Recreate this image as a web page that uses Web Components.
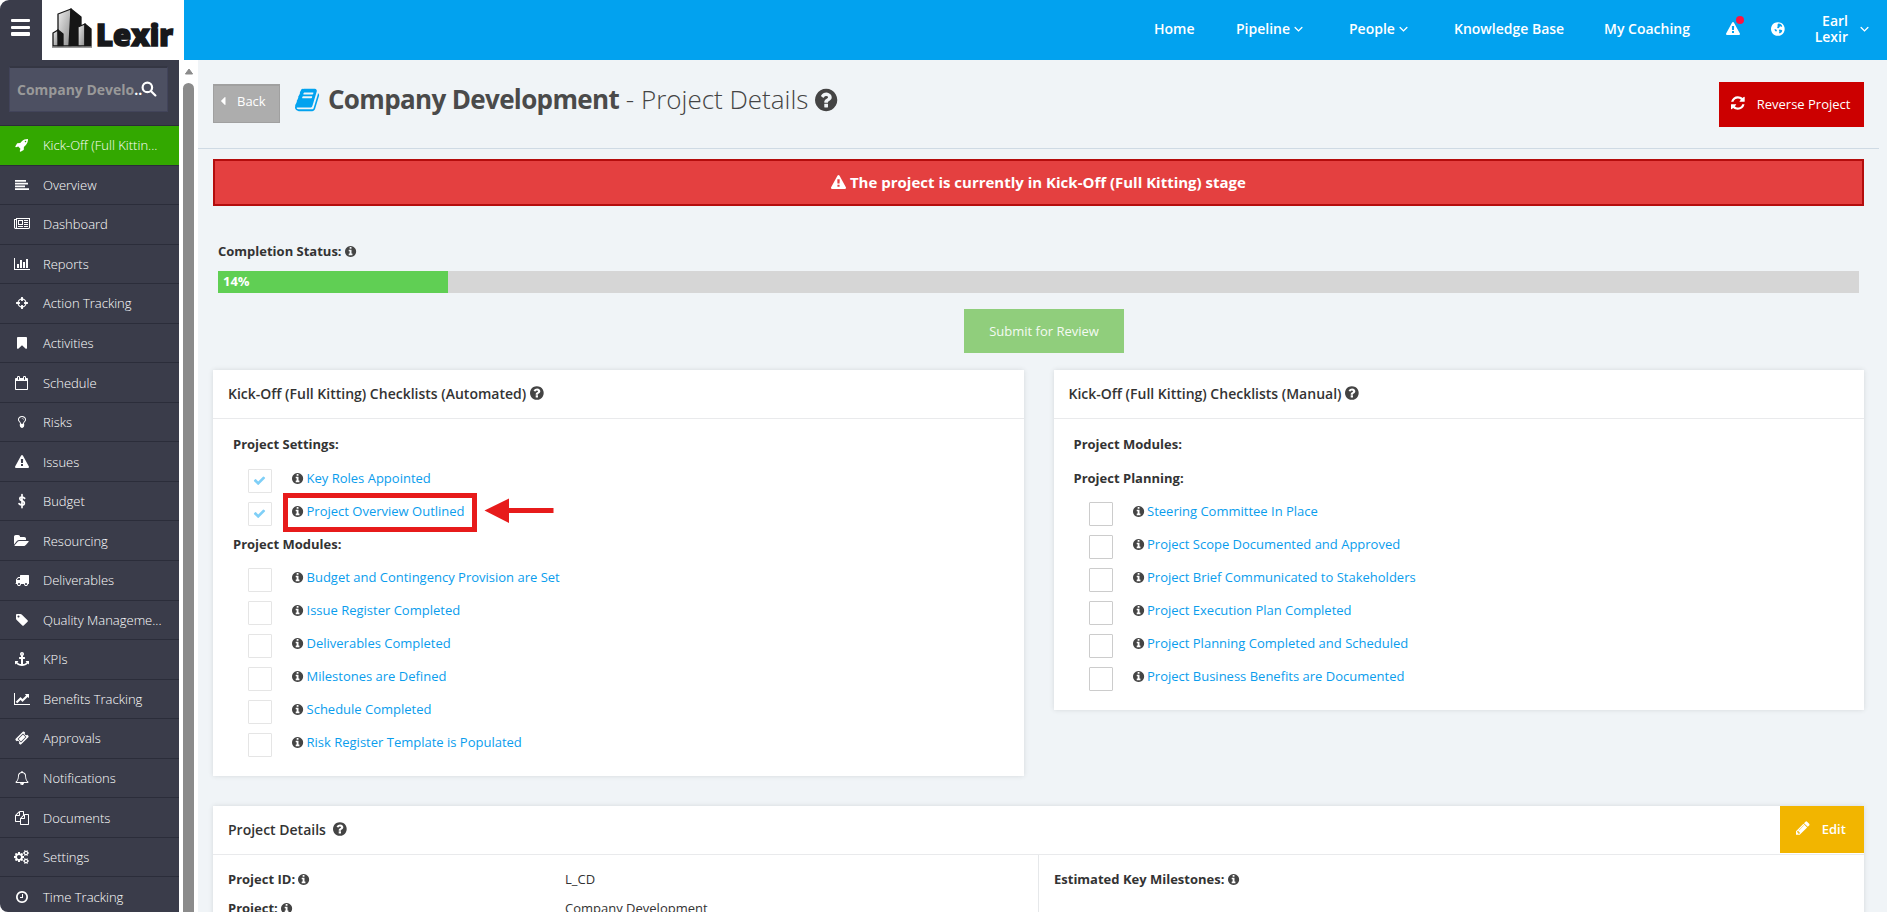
<!DOCTYPE html>
<html lang="en">
<head>
<meta charset="utf-8">
<title>Company Development - Project Details</title>
<style>
    html, body {
        margin: 0;
        height: 100%;
        overflow: hidden;
        background: #fff;
    }
    body {
        font-family: "Open Sans", "Liberation Sans", sans-serif;
        font-size: 13px;
        color: #333;
    }
</style>
</head>
<body>
<project-app></project-app>

<script>
/**
 * 图标数据: [宽度, path]，高度统一为 1792
 */
const CIRCLE = 'M1536 896q0 209-103 385.5t-279.5 279.5-385.5 103-385.5-103-279.5-279.5-103-385.5 103-385.5 279.5-279.5 385.5-103 385.5 103 279.5 279.5 103 385.5z';
const ICONS = {
    'rocket': [1792, 'M1440 448q0-40-28-68t-68-28-68 28-28 68 28 68 68 28 68-28 28-68zm224-288q0 249-75.5 430.5t-253.5 360.5q-81 80-195 176l-20 379q-2 16-16 26l-384 224q-7 4-16 4-12 0-23-9l-64-64q-13-14-8-32l85-276-281-281-276 85q-3 1-9 1-14 0-23-9l-64-64q-17-19-5-39l224-384q10-14 26-16l379-20q96-114 176-195 188-187 358-258t431-71q14 0 24 9.5t10 22.5z'],
    'align-left': [1792, 'M0 256h1408v224h-1408zM0 608h1664v224h-1664zM0 960h1280v224h-1280zM0 1312h1792v224h-1792z'],
    'newspaper': [2048, 'M1024 512h-384v384h384v-384zm128 640v128h-640v-128h640zm0-768v640h-640v-640h640zm640 768v128h-512v-128h512zm0-256v128h-512v-128h512zm0-256v128h-512v-128h512zm0-256v128h-512v-128h512zm-1536 960v-960h-128v960q0 26 19 45t45 19 45-19 19-45zm1664 0v-1088h-1536v1088q0 33-11 64h1483q26 0 45-19t19-45zm128-1216v1216q0 80-56 136t-136 56h-1664q-80 0-136-56t-56-136v-1088h256v-128h1792z'],
    'bar-chart': [2048, 'M640 896v512h-256v-512h256zm384-512v1024h-256v-1024h256zm1024 1152v128h-2048v-1536h128v1408h1920zm-640-896v768h-256v-768h256zm384-384v1152h-256v-1152h256z'],
    'crosshairs': [1536, 'M1197 1024h-109q-26 0-45-19t-19-45v-128q0-26 19-45t45-19h109q-32-108-112.5-188.5t-188.5-112.5v109q0 26-19 45t-45 19h-128q-26 0-45-19t-19-45v-109q-108 32-188.5 112.5t-112.5 188.5h109q26 0 45 19t19 45v128q0 26-19 45t-45 19h-109q32 108 112.5 188.5t188.5 112.5v-109q0-26 19-45t45-19h128q26 0 45 19t19 45v109q108-32 188.5-112.5t112.5-188.5zm339-192v128q0 26-19 45t-45 19h-143q-37 161-154.5 278.5t-278.5 154.5v143q0 26-19 45t-45 19h-128q-26 0-45-19t-19-45v-143q-161-37-278.5-154.5t-154.5-278.5h-143q-26 0-45-19t-19-45v-128q0-26 19-45t45-19h143q37-161 154.5-278.5t278.5-154.5v-143q0-26 19-45t45-19h128q26 0 45 19t19 45v143q161 37 278.5 154.5t154.5 278.5h143q26 0 45 19t19 45z'],
    'bookmark': [1280, 'M1164 128q23 0 44 9 33 13 52.5 41t19.5 62v1289q0 34-19.5 62t-52.5 41q-19 8-44 8-48 0-83-32l-441-424-441 424q-36 33-83 33-23 0-44-9-33-13-52.5-41t-19.5-62v-1289q0-34 19.5-62t52.5-41q21-9 44-9h1048z'],
    'calendar': [1664, 'M128 1664h1408v-1024h-1408v1024zm384-1216v-288q0-14-9-23t-23-9h-64q-14 0-23 9t-9 23v288q0 14 9 23t23 9h64q14 0 23-9t9-23zm768 0v-288q0-14-9-23t-23-9h-64q-14 0-23 9t-9 23v288q0 14 9 23t23 9h64q14 0 23-9t9-23zm384-64v1280q0 52-38 90t-90 38h-1408q-52 0-90-38t-38-90v-1280q0-52 38-90t90-38h128v-96q0-66 47-113t113-47h64q66 0 113 47t47 113v96h384v-96q0-66 47-113t113-47h64q66 0 113 47t47 113v96h128q52 0 90 38t38 90z'],
    'lightbulb': [1024, 'M736 576q0 13-9.5 22.5t-22.5 9.5-22.5-9.5-9.5-22.5q0-46-54-71t-106-25q-13 0-22.5-9.5t-9.5-22.5 9.5-22.5 22.5-9.5q50 0 99.5 16t87 54 37.5 90zm160 0q0-72-34.5-134t-90-101.5-123-62-136.5-22.5-136.5 22.5-123 62-90 101.5-34.5 134q0 101 68 180 10 11 30.5 33t30.5 33q128 153 141 298h228q13-145 141-298 10-11 30.5-33t30.5-33q68-79 68-180zm128 0q0 155-103 268-45 49-74.5 87t-59.5 95.5-34 107.5q47 28 47 82 0 37-25 64 25 27 25 64 0 52-45 81 13 23 13 47 0 46-31.5 71t-77.5 25q-20 44-60 70t-87 26-87-26-60-70q-46 0-77.5-25t-31.5-71q0-24 13-47-45-29-45-81 0-37 25-64-25-27-25-64 0-54 47-82-4-50-34-107.5t-59.5-95.5-74.5-87q-103-113-103-268 0-99 44.5-184.5t117-142 164-89 186.5-32.5 186.5 32.5 164 89 117 142 44.5 184.5z'],
    'warning': [1792, 'M1024 1375v-190q0-14-9.5-23.5t-22.5-9.5h-192q-13 0-22.5 9.5t-9.5 23.5v190q0 14 9.5 23.5t22.5 9.5h192q13 0 22.5-9.5t9.5-23.5zm-2-374l18-459q0-12-10-19-13-11-24-11h-220q-11 0-24 11-10 7-10 21l17 457q0 10 10 16.5t24 6.5h185q14 0 23.5-6.5t10.5-16.5zm-14-934l768 1408q35 63-2 126-17 29-46.5 46t-63.5 17h-1536q-34 0-63.5-17t-46.5-46q-37-63-2-126l768-1408q17-31 47-49t65-18 65 18 47 49z'],
    'folder': [1920, 'M1879 952q0 31-31 66l-336 396q-43 51-120.5 86.5t-143.5 35.5h-1088q-34 0-60.5-13t-26.5-43q0-31 31-66l336-396q43-51 120.5-86.5t143.5-35.5h1088q34 0 60.5 13t26.5 43zm-343-344v160h-832q-94 0-197 47.5t-164 119.5l-337 396-5 6q0-4-.5-12.5t-.5-12.5v-960q0-92 66-158t158-66h320q92 0 158 66t66 158v32h544q92 0 158 66t66 158z'],
    'truck': [1792, 'M640 1408q0-52-38-90t-90-38-90 38-38 90 38 90 90 38 90-38 38-90zm-384-512h384v-256h-158q-13 0-22 9l-195 195q-9 9-9 22v30zm1280 512q0-52-38-90t-90-38-90 38-38 90 38 90 90 38 90-38 38-90zm256-1088v1024q0 15-4 26.5t-13.5 18.5-16.5 11.5-23.5 6-22.5 2-25.5 0-22.5-.5q0 106-75 181t-181 75-181-75-75-181h-384q0 106-75 181t-181 75-181-75-75-181h-64q-3 0-22.5.5t-25.5 0-22.5-2-23.5-6-16.5-11.5-13.5-18.5-4-26.5q0-26 19-45t45-19v-320q0-8-.5-35t0-38 2.5-34.5 6.5-37 14-30.5 22.5-30l198-198q19-19 50.5-32t58.5-13h160v-192q0-26 19-45t45-19h1024q26 0 45 19t19 45z'],
    'tag': [1536, 'M448 448q0-53-37.5-90.5t-90.5-37.5-90.5 37.5-37.5 90.5 37.5 90.5 90.5 37.5 90.5-37.5 37.5-90.5zm1067 576q0 53-37 90l-491 492q-39 37-91 37-53 0-90-37l-715-716q-38-37-64.5-101t-26.5-117v-416q0-52 38-90t90-38h416q53 0 117 26.5t102 64.5l715 714q37 39 37 91z'],
    'anchor': [1792, 'M960 256q0-26-19-45t-45-19-45 19-19 45 19 45 45 19 45-19 19-45zm832 928v352q0 22-20 30-8 2-12 2-12 0-23-9l-93-93q-119 143-318.5 226.5t-429.5 83.5-429.5-83.5-318.5-226.5l-93 93q-9 9-23 9-4 0-12-2-20-8-20-30v-352q0-14 9-23t23-9h352q22 0 30 20 8 19-7 35l-100 100q67 91 189.5 153.5t271.5 82.5v-647h-192q-26 0-45-19t-19-45v-128q0-26 19-45t45-19h192v-163q-58-34-93-92.5t-35-128.5q0-106 75-181t181-75 181 75 75 181q0 70-35 128.5t-93 92.5v163h192q26 0 45 19t19 45v128q0 26-19 45t-45 19h-192v647q149-20 271.5-82.5t189.5-153.5l-100-100q-15-16-7-35 8-20 30-20h352q14 0 23 9t9 23z'],
    'line-chart': [2048, 'M2048 1536v128h-2048v-1536h128v1408h1920zm-128-1248v435q0 21-19.5 29.5t-35.5-7.5l-121-121-633 633q-10 10-23 10t-23-10l-233-233-416 416-192-192 585-585q10-10 23-10t23 10l233 233 464-464-121-121q-16-16-7.5-35.5t29.5-19.5h435q14 0 23 9t9 23z'],
    'ticket': [1792, 'M1024 452l316 316-572 572-316-316zm-211 979l618-618q19-19 19-45t-19-45l-362-362q-18-18-45-18t-45 18l-618 618q-19 19-19 45t19 45l362 362q18 18 45 18t45-18zm889-637l-907 908q-37 37-90.5 37t-90.5-37l-126-126q56-56 56-136t-56-136-136-56-136 56l-125-126q-37-37-37-90.5t37-90.5l907-906q37-37 90.5-37t90.5 37l125 125q-56 56-56 136t56 136 136 56 136-56l126 125q37 37 37 90.5t-37 90.5z'],
    'bell': [1792, 'M912 1696q0-16-16-16-59 0-101.5-42.5t-42.5-101.5q0-16-16-16t-16 16q0 73 51.5 124.5t124.5 51.5q16 0 16-16zm-666-288h1300q-266-300-266-832 0-51-24-105t-69-103-121.5-80.5-169.5-31.5-169.5 31.5-121.5 80.5-69 103-24 105q0 532-266 832zm1482 0q0 52-38 90t-90 38h-448q0 106-75 181t-181 75-181-75-75-181h-448q-52 0-90-38t-38-90q50-42 91-88t85-119.5 74.5-158.5 50-206 19.5-260q0-152 117-282.5t307-158.5q-8-19-8-39 0-40 28-68t68-28 68 28 28 68q0 20-8 39 190 28 307 158.5t117 282.5q0 139 19.5 260t50 206 74.5 158.5 85 119.5 91 88z'],
    'files': [1792, 'M1696 384q40 0 68 28t28 68v1216q0 40-28 68t-68 28h-960q-40 0-68-28t-28-68v-288h-544q-40 0-68-28t-28-68v-672q0-40 20-88t48-76l408-408q28-28 76-48t88-20h416q40 0 68 28t28 68v328q68-40 128-40h416zm-544 213l-299 299h299v-299zm-640-384l-299 299h299v-299zm196 647l316-316v-416h-384v416q0 40-28 68t-68 28h-416v640h512v-256q0-40 20-88t48-76zm956 804v-1152h-384v416q0 40-28 68t-68 28h-416v640h896z'],
    'cogs': [1920, 'M896 896q0-106-75-181t-181-75-181 75-75 181 75 181 181 75 181-75 75-181zm768 512q0-52-38-90t-90-38-90 38-38 90q0 53 37.5 90.5t90.5 37.5 90.5-37.5 37.5-90.5zm0-1024q0-52-38-90t-90-38-90 38-38 90q0 53 37.5 90.5t90.5 37.5 90.5-37.5 37.5-90.5zm-384 421v185q0 10-7 19.5t-16 10.5l-155 24q-11 35-32 76 34 48 90 115 7 11 7 20 0 12-7 19-23 30-82.5 89.5t-78.5 59.5q-11 0-21-7l-115-90q-37 19-77 31-11 108-23 155-7 24-30 24h-186q-11 0-20-7.5t-10-17.5l-23-153q-34-10-75-31l-118 89q-7 7-20 7-11 0-21-8-144-133-144-160 0-9 7-19 10-14 41-53t47-61q-23-44-35-82l-152-24q-10-1-17-9.5t-7-19.5v-185q0-10 7-19.5t16-10.5l155-24q11-35 32-76-34-48-90-115-7-11-7-20 0-12 7-20 22-30 82-89t79-59q11 0 21 7l115 90q34-18 77-32 11-108 23-154 7-24 30-24h186q11 0 20 7.5t10 17.5l23 153q34 10 75 31l118-89q8-7 20-7 11 0 21 8 144 133 144 160 0 8-7 19-12 16-42 54t-45 60q23 48 34 82l152 23q10 2 17 10.5t7 19.5zm640 533v140q0 16-149 31-12 27-30 52 51 113 51 138 0 4-4 7-122 71-124 71-8 0-46-47t-52-68q-20 2-30 2t-30-2q-14 21-52 68t-46 47q-2 0-124-71-4-3-4-7 0-25 51-138-18-25-30-52-149-15-149-31v-140q0-16 149-31 13-29 30-52-51-113-51-138 0-4 4-7 4-2 35-20t59-34 30-16q8 0 46 46.5t52 67.5q20-2 30-2t30 2q51-71 92-112l6-2q4 0 124 70 4 3 4 7 0 25-51 138 17 23 30 52 149 15 149 31zm0-1024v140q0 16-149 31-12 27-30 52 51 113 51 138 0 4-4 7-122 71-124 71-8 0-46-47t-52-68q-20 2-30 2t-30-2q-14 21-52 68t-46 47q-2 0-124-71-4-3-4-7 0-25 51-138-18-25-30-52-149-15-149-31v-140q0-16 149-31 13-29 30-52-51-113-51-138 0-4 4-7 4-2 35-20t59-34 30-16q8 0 46 46.5t52 67.5q20-2 30-2t30 2q51-71 92-112l6-2q4 0 124 70 4 3 4 7 0 25-51 138 17 23 30 52 149 15 149 31z'],
    'clock': [1536, 'M896 544v448q0 14-9 23t-23 9h-320q-14 0-23-9t-9-23v-64q0-14 9-23t23-9h224v-352q0-14 9-23t23-9h64q14 0 23 9t9 23zM1312 896q0-148-73-273t-198-198-273-73-273 73-198 198-73 273 73 273 198 198 273 73 273-73 198-198 73-273z' + CIRCLE],
    'info': [1536, 'M1024 1376v-160q0-14-9-23t-23-9h-96v-512q0-14-9-23t-23-9h-320q-14 0-23 9t-9 23v160q0 14 9 23t23 9h96v320h-96q-14 0-23 9t-9 23v160q0 14 9 23t23 9h448q14 0 23-9t9-23zm-128-896v-160q0-14-9-23t-23-9h-192q-14 0-23 9t-9 23v160q0 14 9 23t23 9h192q14 0 23-9t9-23z' + CIRCLE],
    'question': [1536, 'M896 1376v-192q0-14-9-23t-23-9h-192q-14 0-23 9t-9 23v192q0 14 9 23t23 9h192q14 0 23-9t9-23zm256-672q0-88-55.5-163t-138.5-116-170-41q-243 0-371 213-15 24 8 42l132 100q7 6 19 6 16 0 25-12 53-68 86-92 34-24 86-24 48 0 85.5 26t37.5 59q0 38-20 61t-68 45q-63 28-115.5 86.5t-52.5 125.5v36q0 14 9 23t23 9h192q14 0 23-9t9-23q0-19 21.5-49.5t54.5-49.5q32-18 49-28.5t46-35 44.5-48 28-60.5 12.5-81z' + CIRCLE],
    'globe': [1536, 'M820 290l210 30 170 130 60 180-110 20-100-60-110 80-30 120-150 20-80-110 90-130-60-130zM420 900l160 40 90 100-60 130-120-30-90-120zM960 960l240 40 70 90-90 180-190 130-90-70 40-170-60-110z' + CIRCLE],
    'refresh': [1536, 'M1511 1056q0 5-1 7-64 268-268 434.5t-478 166.5q-146 0-282.5-55t-243.5-157l-129 129q-19 19-45 19t-45-19-19-45v-448q0-26 19-45t45-19h448q26 0 45 19t19 45-19 45l-137 137q71 66 161 102t187 36q134 0 250-65t186-179q11-17 53-117 8-23 30-23h192q13 0 22.5 9.5t9.5 22.5zm25-800v448q0 26-19 45t-45 19h-448q-26 0-45-19t-19-45 19-45l138-138q-148-137-349-137-134 0-250 65t-186 179q-11 17-53 117-8 23-30 23h-199q-13 0-22.5-9.5t-9.5-22.5v-7q65-268 270-434.5t480-166.5q146 0 284 55.5t245 156.5l130-129q19-19 45-19t45 19 19 45z'],
    'pencil': [1536, 'M363 1536l91-91-235-235-91 91v107h128v128h107zm523-928q0-22-22-22-10 0-17 7l-542 542q-7 7-7 17 0 22 22 22 10 0 17-7l542-542q7-7 7-17zm-54-192l416 416-832 832h-416v-416zm683 96q0 53-37 90l-166 166-416-416 166-165q36-38 90-38 53 0 91 38l235 234q37 39 37 91z'],
    'book': [1664, 'M1639 478q40 57 18 129l-275 906q-19 64-76.5 107.5t-122.5 43.5h-923q-77 0-148.5-53.5t-99.5-131.5q-24-67-2-127 0-4 3-27t4-37q1-8-3-21.5t-3-19.5q2-11 8-21t16.5-23.5 16.5-23.5q23-38 45-91.5t30-91.5q3-10 .5-30t-.5-28q3-11 17-28t17-23q21-36 42-92t25-90q1-9-2.5-32t.5-28q4-13 22-30.5t22-22.5q19-26 42.5-84.5t27.5-96.5q1-8-3-25.5t-2-26.5q2-8 9-18t18-23 17-21q8-12 16.5-30.5t15-35 16-36 19.5-32 26.5-23.5 36-11.5 47.5 5.5l-1 3q38-9 51-9h761q74 0 114 56t18 130l-274 906q-36 119-71.5 153.5t-128.5 34.5h-869q-27 0-38 15-11 16-1 43 24 70 144 70h923q29 0 56-15.5t35-41.5l300-987q7-22 5-57 38 15 59 43zm-1064 2q-4 13 2 22.5t20 9.5h608q13 0 25.5-9.5t16.5-22.5l21-64q4-13-2-22.5t-20-9.5h-608q-13 0-25.5 9.5t-16.5 22.5zm-83 256q-4 13 2 22.5t20 9.5h608q13 0 25.5-9.5t16.5-22.5l21-64q4-13-2-22.5t-20-9.5h-608q-13 0-25.5 9.5t-16.5 22.5z'],
    'check': [1792, 'M1671 566q0 40-28 68l-724 724-136 136q-28 28-68 28t-68-28l-136-136-362-362q-28-28-28-68t28-68l136-136q28-28 68-28t68 28l294 295 656-657q28-28 68-28t68 28l136 136q28 28 28 68z'],
    'caret-left': [640, 'M576 448v896q0 26-19 45t-45 19-45-19l-448-448q-19-19-19-45t19-45l448-448q19-19 45-19t45 19 19 45z']
};
// 用描边绘制的图标: [宽度, path, 线宽]
const STROKE_ICONS = {
    'usd': [1024, 'M850 560Q730 400 510 400Q230 400 230 610Q230 790 512 870Q810 950 810 1180Q810 1400 510 1400Q270 1400 130 1230M512 60V1740', 215],
    'angle-down': [1152, 'M140 700l436 436 436-436', 170],
    'search': [1664, 'M1170 780a500 500 0 1 1-1000 0 500 500 0 1 1 1000 0zM1040 1150l480 480', 230]
};

/**
 * 基类，负责克隆模板到 shadow root
 */
class BaseElement extends HTMLElement {
    constructor() {
        super();
        const template = document.createElement('template');
        template.innerHTML = this.render();
        this.attachShadow({ mode: 'open' }).appendChild(template.content.cloneNode(true));
    }
    render() {
        return '<slot></slot>';
    }
}

/**
 * 图标组件，大小跟随 font-size
 */
class UiIcon extends HTMLElement {
    connectedCallback() {
        if (this.shadowRoot) {
            return;
        }
        const name = this.getAttribute('name');
        const stroke = STROKE_ICONS[name];
        const [width, d, line] = stroke || ICONS[name];
        const paint = stroke
            ? `fill="none" stroke="currentColor" stroke-width="${line}" stroke-linecap="round"`
            : 'fill="currentColor" fill-rule="evenodd"';
        this.attachShadow({ mode: 'open' }).innerHTML = `
        <style>
            :host { display: inline-block; line-height: 1; height: 1em; vertical-align: -.143em; }
            svg { display: block; height: 1em; width: ${width / 1792}em; overflow: visible; }
        </style>
        <svg viewBox="0 0 ${width} 1792"><path ${paint} d="${d}"/></svg>`;
    }
}

/**
 * 公司 logo
 */
class BrandLogo extends BaseElement {
    render() {
        return `
        <style>
            :host { display: block; width: 142px; height: 60px; background: #fff; }
            svg { display: block; }
            text { font: 800 30px "Open Sans", "Liberation Sans", sans-serif; fill: #17181b; stroke: #17181b; stroke-width: 1.6px; }
        </style>
        <svg width="142" height="60" viewBox="0 0 142 60">
            <defs>
                <linearGradient id="wall" x1="0" y1="0" x2="1" y2="1">
                    <stop offset="0" stop-color="#eee"/>
                    <stop offset="1" stop-color="#8b8b8b"/>
                </linearGradient>
            </defs>
            <g stroke="#161616" stroke-width="1.3" stroke-linejoin="round">
                <path fill="url(#wall)" d="M16 14l13-5v37h-13z"/>
                <path fill="#161616" d="M29 9l10 8v29h-12z"/>
                <path fill="url(#wall)" d="M11 33l5-3 1 16h-6z"/>
                <path fill="#161616" d="M16 30l5 4v12h-5z"/>
                <path fill="url(#wall)" d="M36 27l7-3v22h-7z"/>
                <path fill="#161616" d="M43 24l6 5v17h-6z"/>
                <path fill="none" stroke="#777" d="M10 47h40"/>
            </g>
            <text x="54" y="46" textLength="77" lengthAdjust="spacingAndGlyphs">Lexir</text>
        </svg>`;
    }
}

/**
 * 顶部导航栏
 */
class TopBar extends BaseElement {
    render() {
        return `
        <style>
            :host { display: flex; height: 60px; background: #02a2ef; color: #fff; font-size: 14px; font-weight: 550; }
            .corner { background: #fff; }
            .toggle { width: 42px; height: 60px; display: flex; flex-direction: column; align-items: center; gap: 3.5px; padding: 19px 1px 0 0; box-sizing: border-box; background: #3a3c4a; border-top-left-radius: 9px; }
            .toggle i { width: 19px; height: 3.2px; border-radius: 1px; background: #fff; }
            nav { flex: 1; display: flex; justify-content: flex-end; align-items: center; padding-right: 18px; padding-bottom: 3px; box-sizing: border-box; }
            nav > * { display: flex; align-items: center; white-space: nowrap; gap: 4px; }
            .alert { position: relative; }
            .alert b { position: absolute; right: -4px; top: -3px; width: 8px; height: 8px; border-radius: 50%; background: #fb1440; }
            .user { text-align: right; line-height: 16px; gap: 12px; white-space: normal; }
            .user span { width: 34px; }
        </style>
        <div class="corner"><div class="toggle"><i></i><i></i><i></i></div></div>
        <brand-logo></brand-logo>
        <nav>
            <span style="width:82px">Home</span>
            <span style="width:113px">Pipeline <ui-icon name="angle-down"></ui-icon></span>
            <span style="width:105px">People <ui-icon name="angle-down"></ui-icon></span>
            <span style="width:150px">Knowledge Base</span>
            <span style="width:122px">My Coaching</span>
            <span style="width:45px"><span class="alert"><ui-icon name="warning"></ui-icon><b></b></span></span>
            <span style="width:43px"><ui-icon name="globe" style="font-size:16px"></ui-icon></span>
            <span class="user"><span>Earl Lexir</span><ui-icon name="angle-down"></ui-icon></span>
        </nav>`;
    }
}

/**
 * 侧边栏菜单项
 */
class MenuItem extends HTMLElement {
    connectedCallback() {
        this.attachShadow({ mode: 'open' }).innerHTML = `
        <style>
            :host { display: flex; align-items: center; height: 39.56px; flex: none; box-sizing: border-box; border-top: 1px solid #2b2d3a; color: #fff; font-weight: 340; }
            :host([active]) { background: #33a800; }
            .icon { width: 43px; display: flex; justify-content: center; font-size: 14px; }
        </style>
        <span class="icon"><ui-icon name="${this.getAttribute('icon')}"></ui-icon></span>
        <span><slot></slot></span>`;
    }
}

/**
 * 侧边栏
 */
class SideBar extends BaseElement {
    render() {
        return `
        <style>
            :host { display: flex; width: 198px; flex: none; background: #fff; overflow: hidden; }
            .panel { width: 179px; background: #3a3c4a; display: flex; flex-direction: column; border-bottom-left-radius: 8px; overflow: hidden; }
            .search { margin: 6px 11px 13px 9px; height: 46px; flex: none; box-sizing: border-box; border: 1px solid #42445a; border-top: 2px solid #343643; background: #4d5062; color: #999; display: flex; align-items: center; padding: 0 0 0 7px; font-size: 14px; font-weight: 700; white-space: nowrap; }
            .search span { color: #fff; }
            .search ui-icon { color: #fff; font-size: 17px; margin: -3px 0 0 -1px; }
            .track { flex: 1; display: flex; flex-direction: column; align-items: center; padding: 8px 0 0; }
            .track svg { display: block; margin-bottom: 8px; }
            .thumb { width: 11px; flex: 1; background: #8b8b8b; border-radius: 6px 6px 0 0; margin-right: 1px; }
        </style>
        <div class="panel">
            <div class="search">Company Develo<span>..</span><ui-icon name="search"></ui-icon></div>
            <slot></slot>
        </div>
        <div class="track">
            <svg width="10" height="7" viewBox="0 0 10 7"><path d="M5 1L8.6 6H1.4z" fill="#8b8b8b" stroke="#8b8b8b" stroke-linejoin="round"/></svg>
            <div class="thumb"></div>
        </div>`;
    }
}

/**
 * 白色卡片
 */
class UiCard extends BaseElement {
    render() {
        return `
        <style>
            :host { display: block; background: #fff; box-shadow: 0 0 5px rgba(0, 0, 0, .11); }
            header { display: flex; justify-content: space-between; height: 48px; border-bottom: 1px solid #e9eaec; }
            h2 { margin: 0; padding-left: 15px; font-size: 14px; font-weight: 600; line-height: 47px; }
        </style>
        <header><h2><slot name="title"></slot></h2><slot name="action"></slot></header>
        <slot></slot>`;
    }
}

/**
 * 检查项分组标题
 */
class CheckGroup extends BaseElement {
    render() {
        return `
        <style>
            :host { display: block; height: 33px; line-height: 33px; padding-left: 20px; font-weight: 700; }
        </style>
        <slot></slot>`;
    }
}

/**
 * 检查项，支持 checked、disabled、highlight
 */
class CheckItem extends BaseElement {
    render() {
        return `
        <style>
            :host { display: flex; height: 33px; padding-left: 35px; line-height: 33px; position: relative; }
            .box { width: 24px; height: 24px; box-sizing: border-box; border: 1px solid #ccc; border-radius: 1px; margin: 7px 20px 0 0; line-height: 1; text-align: center; padding: 4px 1px 0 0; color: #7fcff7; font-size: 13px; }
            :host([disabled]) .box { border-color: #e5e5e5; }
            .box ui-icon { display: none; }
            :host([checked]) .box ui-icon { display: inline-block; }
            .info { color: #444; }
            a { color: #0a9ded; }
            .mark { display: none; position: absolute; left: 70px; top: -2px; }
            :host([highlight]) .mark { display: block; }
        </style>
        <span class="box"><ui-icon name="check"></ui-icon></span>
        <span><ui-icon class="info" name="info"></ui-icon> <a><slot></slot></a></span>
        <svg class="mark" width="273" height="40" viewBox="0 0 273 40">
            <rect x="2.5" y="2.5" width="189" height="34" fill="none" stroke="#e71b1b" stroke-width="5"/>
            <path fill="#e71b1b" d="M201.500 17.500L226 5.500V15H270.500v5H226V30z"/>
        </svg>`;
    }
}

/**
 * 进度条
 */
class ProgressBar extends HTMLElement {
    connectedCallback() {
        const value = this.getAttribute('value');
        this.attachShadow({ mode: 'open' }).innerHTML = `
        <style>
            :host { display: block; height: 22px; background: #d6d6d6; }
            div { width: ${value}%; height: 100%; background: #60cf54; color: #fff; font-weight: 700; line-height: 21px; text-indent: 5px; }
        </style>
        <div>${value}%</div>`;
    }
}

/**
 * 页面主体
 */
class ProjectApp extends BaseElement {
    render() {
        const menu = [
            ['rocket', 'Kick-Off (Full Kittin...'], ['align-left', 'Overview'], ['newspaper', 'Dashboard'],
            ['bar-chart', 'Reports'], ['crosshairs', 'Action Tracking'], ['bookmark', 'Activities'],
            ['calendar', 'Schedule'], ['lightbulb', 'Risks'], ['warning', 'Issues'], ['usd', 'Budget'],
            ['folder', 'Resourcing'], ['truck', 'Deliverables'], ['tag', 'Quality Manageme...'],
            ['anchor', 'KPIs'], ['line-chart', 'Benefits Tracking'], ['ticket', 'Approvals'],
            ['bell', 'Notifications'], ['files', 'Documents'], ['cogs', 'Settings'], ['clock', 'Time Tracking']
        ];
        const modules = ['Budget and Contingency Provision are Set', 'Issue Register Completed', 'Deliverables Completed',
            'Milestones are Defined', 'Schedule Completed', 'Risk Register Template is Populated'];
        const planning = ['Steering Committee In Place', 'Project Scope Documented and Approved',
            'Project Brief Communicated to Stakeholders', 'Project Execution Plan Completed',
            'Project Planning Completed and Scheduled', 'Project Business Benefits are Documented'];
        return `
        <style>
            :host { display: flex; flex-direction: column; height: 100vh; overflow: hidden; }
            .body { flex: 1; display: flex; min-height: 0; }
            main { flex: 1; min-width: 0; background: #f0f4f7; overflow: hidden; }
            .head { display: flex; align-items: flex-start; height: 88px; box-sizing: border-box; margin-right: 8px; padding: 22px 15px 0; }
            .back { width: 67px; height: 39px; margin-top: 2px; box-sizing: border-box; border: 1px solid #a0a0a0; border-top-width: 2px; background: #adadad; color: #fff; line-height: 31px; padding-left: 7px; }
            .back ui-icon { font-size: 14px; margin-right: 11px; vertical-align: -2px; }
            h1 { flex: 1; margin: 0 0 0 15px; font-size: 26px; line-height: 34px; font-weight: 330; color: #444; white-space: nowrap; }
            h1 .book { color: #02a2ef; margin-right: 2px; }
            h1 b { color: #4a4a4a; font-weight: 700; letter-spacing: -.65px; }
            .reverse { width: 145px; height: 45px; display: flex; align-items: center; background: #c00; color: #fff; padding: 0 0 2px 12px; box-sizing: border-box; }
            .reverse ui-icon { font-size: 16px; margin: -2px 12px 0 0; }
            .content { border-top: 1px solid #cfdae4; margin-right: 8px; padding: 10px 15px 0; }
            .alert { height: 47px; box-sizing: border-box; border: 2px solid #b40d0d; background: #e44040; color: #fff; text-align: center; font-size: 15px; font-weight: 700; line-height: 43px; }
            .status { padding: 36px 5px 0; }
            .status p { margin: 0; height: 29px; line-height: 18px; font-weight: 700; }
            .submit { width: 160px; height: 44px; margin: 16px 740px 17px auto; background: #90ce7c; color: #f4faf2; text-align: center; line-height: 44px; font-weight: 500; }
            .cards { display: flex; align-items: flex-start; gap: 30px; margin-bottom: 30px; }
            .cards ui-card { flex: 1; }
            .list { padding: 9px 0 17px; }
            .list > :first-child { margin-bottom: 1px; }
            .big { font-size: 16px; color: #444; }
            .edit { width: 84px; height: 47px; background: #f2b500; color: #fff; font-weight: 600; display: flex; align-items: center; box-sizing: border-box; padding: 0 0 2px 16px; }
            .edit ui-icon { font-size: 16px; margin: -1px 12px 0 0; }
            .details { display: flex; }
            .details dl { margin: 0; padding: 10px 15px 0; display: grid; grid-template-columns: 337px 1fr; grid-auto-rows: 29px; line-height: 29px; box-sizing: border-box; height: 200px; }
            .details dl:first-child { width: 825px; }
            .details dl + dl { border-left: 1px solid #e6e8ea; }
            dt { font-weight: 700; }
            dd { margin: 0; }
            dt ui-icon, p ui-icon { color: #444; }
        </style>
        <top-bar></top-bar>
        <div class="body">
            <side-bar>
                ${menu.map(([icon, text], i) => `<menu-item icon="${icon}" ${i ? '' : 'active'}>${text}</menu-item>`).join('')}
            </side-bar>
            <main>
                <div class="head">
                    <div class="back"><ui-icon name="caret-left"></ui-icon>Back</div>
                    <h1><ui-icon class="book" name="book"></ui-icon> <b>Company Development</b> - Project Details <ui-icon name="question"></ui-icon></h1>
                    <div class="reverse"><ui-icon name="refresh"></ui-icon>Reverse Project</div>
                </div>
                <div class="content">
                    <div class="alert"><ui-icon name="warning"></ui-icon> The project is currently in Kick-Off (Full Kitting) stage</div>
                    <div class="status">
                        <p>Completion Status: <ui-icon name="info"></ui-icon></p>
                        <progress-bar value="14"></progress-bar>
                    </div>
                    <div class="submit">Submit for Review</div>
                    <div class="cards">
                        <ui-card>
                            <span slot="title">Kick-Off (Full Kitting) Checklists (Automated) <ui-icon class="big" name="question"></ui-icon></span>
                            <div class="list">
                                <check-group>Project Settings:</check-group>
                                <check-item checked disabled>Key Roles Appointed</check-item>
                                <check-item checked disabled highlight>Project Overview Outlined</check-item>
                                <check-group>Project Modules:</check-group>
                                ${modules.map(t => `<check-item disabled>${t}</check-item>`).join('')}
                            </div>
                        </ui-card>
                        <ui-card>
                            <span slot="title">Kick-Off (Full Kitting) Checklists (Manual) <ui-icon class="big" name="question"></ui-icon></span>
                            <div class="list">
                                <check-group>Project Modules:</check-group>
                                <check-group>Project Planning:</check-group>
                                ${planning.map(t => `<check-item>${t}</check-item>`).join('')}
                            </div>
                        </ui-card>
                    </div>
                    <ui-card>
                        <span slot="title">Project Details&nbsp; <ui-icon class="big" name="question"></ui-icon></span>
                        <div slot="action" class="edit"><ui-icon name="pencil"></ui-icon>Edit</div>
                        <div class="details">
                            <dl>
                                <dt>Project ID: <ui-icon name="info"></ui-icon></dt><dd>L_CD</dd>
                                <dt>Project: <ui-icon name="info"></ui-icon></dt><dd>Company Development</dd>
                            </dl>
                            <dl>
                                <dt>Estimated Key Milestones: <ui-icon name="info"></ui-icon></dt>
                            </dl>
                        </div>
                    </ui-card>
                </div>
            </main>
        </div>`;
    }
}

// 注册组件
customElements.define('ui-icon', UiIcon);
customElements.define('brand-logo', BrandLogo);
customElements.define('top-bar', TopBar);
customElements.define('menu-item', MenuItem);
customElements.define('side-bar', SideBar);
customElements.define('ui-card', UiCard);
customElements.define('check-group', CheckGroup);
customElements.define('check-item', CheckItem);
customElements.define('progress-bar', ProgressBar);
customElements.define('project-app', ProjectApp);
</script>
</body>
</html>
